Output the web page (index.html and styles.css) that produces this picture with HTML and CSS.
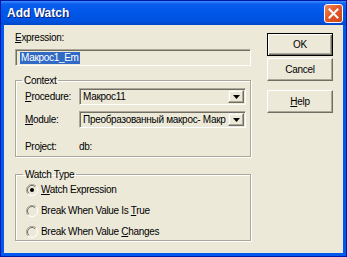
FILE: index.html
```html
<!DOCTYPE html>
<html lang="en">
<head>
    <meta charset="UTF-8">
    <title>Add Watch</title>
    <link rel="stylesheet" href="styles.css">
</head>
<body>
    <div class="window">
        <div class="titlebar">
            <span class="title">Add Watch</span>
            <span class="close">
                <svg width="19" height="19" viewBox="0 0 19 19">
                    <path d="M5.5 5.5 L13.5 13.5 M13.5 5.5 L5.5 13.5" stroke="#fff" stroke-width="2" stroke-linecap="square"/>
                </svg>
            </span>
        </div>
        <div class="frame">
            <div class="main">
                <div class="field-label"><u>E</u>xpression:</div>
                <div class="textbox"><span class="sel">Макрос1_Em</span></div>

                <fieldset class="group context">
                    <legend>Context</legend>
                    <div class="row">
                        <span class="lbl"><u>P</u>rocedure:</span>
                        <div class="combo">
                            <span class="combo-text">Макрос11</span>
                            <span class="drop"><svg width="7" height="4" viewBox="0 0 7 4"><path d="M0 0 H7 L3.5 4 Z" fill="#000"/></svg></span>
                        </div>
                    </div>
                    <div class="row">
                        <span class="lbl"><u>M</u>odule:</span>
                        <div class="combo">
                            <span class="combo-text">Преобразованный макрос- Макр</span>
                            <span class="drop"><svg width="7" height="4" viewBox="0 0 7 4"><path d="M0 0 H7 L3.5 4 Z" fill="#000"/></svg></span>
                        </div>
                    </div>
                    <div class="row project">
                        <span class="lbl">Project:</span>
                        <span>db:</span>
                    </div>
                </fieldset>

                <fieldset class="group watch">
                    <legend>Watch Type</legend>
                    <div class="radio">
                        <svg width="12" height="12" viewBox="0 0 12 12">
                            <path d="M2 10 A5.5 5.5 0 0 1 10 2" fill="none" stroke="#aca899"/>
                            <path d="M2.8 9.2 A4.5 4.5 0 0 1 9.2 2.8" fill="none" stroke="#716f64"/>
                            <path d="M10 2 A5.5 5.5 0 0 1 2 10" fill="none" stroke="#fff"/>
                            <circle cx="6" cy="6" r="2" fill="#000"/>
                        </svg>
                        <span><u>W</u>atch Expression</span>
                    </div>
                    <div class="radio">
                        <svg width="12" height="12" viewBox="0 0 12 12">
                            <path d="M2 10 A5.5 5.5 0 0 1 10 2" fill="none" stroke="#aca899"/>
                            <path d="M2.8 9.2 A4.5 4.5 0 0 1 9.2 2.8" fill="none" stroke="#716f64"/>
                            <path d="M10 2 A5.5 5.5 0 0 1 2 10" fill="none" stroke="#fff"/>
                        </svg>
                        <span>Break When Value Is <u>T</u>rue</span>
                    </div>
                    <div class="radio">
                        <svg width="12" height="12" viewBox="0 0 12 12">
                            <path d="M2 10 A5.5 5.5 0 0 1 10 2" fill="none" stroke="#aca899"/>
                            <path d="M2.8 9.2 A4.5 4.5 0 0 1 9.2 2.8" fill="none" stroke="#716f64"/>
                            <path d="M10 2 A5.5 5.5 0 0 1 2 10" fill="none" stroke="#fff"/>
                        </svg>
                        <span>Break When Value <u>C</u>hanges</span>
                    </div>
                </fieldset>
            </div>

            <div class="buttons">
                <button class="btn default">OK</button>
                <button class="btn">Cancel</button>
                <button class="btn help"><u>H</u>elp</button>
            </div>
        </div>
    </div>
</body>
</html>
```
FILE: styles.css
```css
/* general */
body {
    margin: 0;
    padding: 0;
    background-color: #ece9d8;
    font-family: "Liberation Sans", Arial, sans-serif;
    font-size: 10px;
    letter-spacing: -0.3px;
    color: #000;
}

/* window frame */
.window {
    width: 345px;
    height: 255px;
    border: 1px solid #0019a8;
    display: flex;
    flex-direction: column;
}

.titlebar {
    height: 24px;
    display: flex;
    align-items: center;
    justify-content: space-between;
    padding: 0 3px 0 6px;
    background: linear-gradient(#3d8ef9 0%, #0a5ff0 12%, #0056e8 50%, #0052e0 85%, #0046c8 100%);
}

.title {
    color: #fff;
    font-weight: bold;
    font-size: 12px;
    letter-spacing: 0;
    text-shadow: 1px 1px 0 #0a1e70;
}

.close {
    width: 19px;
    height: 19px;
    box-sizing: border-box;
    border: 1px solid #fff;
    border-radius: 3px;
    background: linear-gradient(135deg, #f08a60 0%, #e35a28 45%, #cc4418 100%);
    display: flex;
}

.close svg {
    margin: -1px;
}

.frame {
    flex: 1;
    display: flex;
    border: 3px solid #0058ee;
    border-top: none;
    background-color: #ece9d8;
}

/* left column */
.main {
    width: 236px;
    padding: 6px 0 0 11px;
}

.field-label {
    line-height: 13px;
    height: 13px;
}

.textbox {
    margin-top: 5px;
    height: 17px;
    box-sizing: border-box;
    border-top: 1px solid #aca899;
    border-left: 1px solid #aca899;
    border-right: 1px solid #fff;
    border-bottom: 1px solid #fff;
    box-shadow: inset 1px 1px 0 #716f64;
    padding: 2px 0 0 4px;
}

.sel {
    display: inline-block;
    background-color: #316ac5;
    color: #fff;
    line-height: 12px;
    padding: 0 1px;
}

/* group boxes */
.group {
    margin: 8px 0 0;
    padding: 1px 4px 3px 9px;
    border: 1px solid #aca899;
    box-shadow: 1px 1px 0 #fff, inset 1px 1px 0 #fff;
    width: 236px;
    min-width: 0;
    box-sizing: border-box;
}

.group legend {
    padding: 0 2px;
    margin-left: -3px;
    line-height: 13px;
}

.row {
    display: flex;
    align-items: center;
    height: 17px;
    margin-bottom: 6px;
}

.lbl {
    width: 54px;
    flex-shrink: 0;
}

.row.project {
    height: 13px;
    margin: 12px 0 0;
}

.combo {
    flex: 1;
    min-width: 0;
    height: 17px;
    box-sizing: border-box;
    display: flex;
    border-top: 1px solid #aca899;
    border-left: 1px solid #aca899;
    border-right: 1px solid #fff;
    border-bottom: 1px solid #fff;
    box-shadow: inset 1px 1px 0 #716f64;
    padding: 1px 1px 1px 3px;
}

.combo-text {
    flex: 1;
    min-width: 0;
    white-space: nowrap;
    line-height: 14px;
}

.drop {
    width: 16px;
    flex-shrink: 0;
    box-sizing: border-box;
    border-top: 1px solid #f1efe2;
    border-left: 1px solid #f1efe2;
    border-right: 1px solid #716f64;
    border-bottom: 1px solid #716f64;
    box-shadow: inset -1px -1px 0 #aca899, inset 1px 1px 0 #fff;
    background-color: #ece9d8;
    display: flex;
    align-items: center;
    justify-content: center;
}

.watch {
    margin-top: 11px;
    padding: 2px 4px 2px 10px;
}

.radio {
    display: flex;
    align-items: center;
    gap: 3px;
    height: 13px;
    margin-bottom: 8px;
}

.radio:last-child {
    margin-bottom: 0;
}

/* buttons */
.buttons {
    display: flex;
    flex-direction: column;
    padding: 8px 0 0 16px;
}

.btn {
    width: 66px;
    height: 23px;
    margin-bottom: 2px;
    font-family: inherit;
    font-size: 10px;
    letter-spacing: -0.3px;
    background-color: #ece9d8;
    border-top: 1px solid #fff;
    border-left: 1px solid #fff;
    border-right: 1px solid #716f64;
    border-bottom: 1px solid #716f64;
    box-shadow: inset -1px -1px 0 #aca899;
    padding: 0;
}

.btn.default {
    border: 1px solid #000;
    box-shadow: inset 1px 1px 0 #fff, inset -1px -1px 0 #716f64, inset -2px -2px 0 #aca899;
}

.btn.help {
    margin-top: 7px;
}
```
